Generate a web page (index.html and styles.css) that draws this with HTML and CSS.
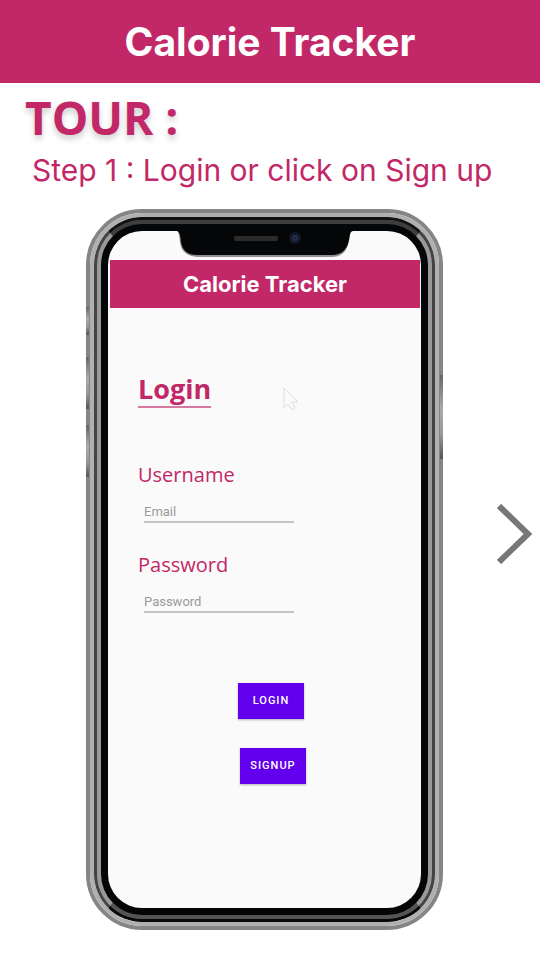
FILE: index.html
```html
<!DOCTYPE html>
<html lang="en">
<head>
<meta charset="utf-8">
<meta name="viewport" content="width=device-width, initial-scale=1">
<title>Calorie Tracker</title>
<link rel="stylesheet" href="styles.css">
</head>
<body>
<header class="app-bar"><h1 class="app-title">Calorie Tracker</h1></header>
<main class="tour">
  <h2 class="tour-title">TOUR :</h2>
  <p class="tour-step">Step 1 : Login or click on Sign up</p>
  <div class="stage">
    <div class="phone">
      <span class="key key-mute"></span>
      <span class="key key-up"></span>
      <span class="key key-down"></span>
      <span class="key key-power"></span>
      <div class="rail">
        <div class="band">
          <div class="bezel">
            <div class="screen">
              <svg class="notch" viewBox="0 0 176 26" aria-hidden="true">
                <path fill="#909090" d="M0 0H176C173 0 173 4 172 10Q169 26 155 26H20Q5 25 3 12Q2 0 0 0Z"/>
                <path fill="#050608" d="M0 0H176C173 0 173 4 172 9Q169 24 155 24H20Q6 24 4 11Q3 0 0 0Z"/>
                <rect x="57" y="5" width="44" height="5" rx="2" fill="#2b2b2b"/>
                <circle cx="118" cy="7" r="6" fill="#11182a"/>
                <circle cx="118" cy="7" r="3" fill="#26304c"/>
                <circle cx="118" cy="7" r="1" fill="#10182c"/>
              </svg>
              <div class="screen-bar">Calorie Tracker</div>
              <form class="login">
                <svg class="cursor" viewBox="0 0 16 24" aria-hidden="true"><path d="M1 1V21L5 17L9 23L12 21L9 15H15Z"/></svg>
                <h3 class="login-title">Login</h3>
                <div class="field">
                  <label for="username">Username</label>
                  <input id="username" type="text" placeholder="Email">
                </div>
                <div class="field">
                  <label for="password">Password</label>
                  <input id="password" type="password" placeholder="Password">
                </div>
                <div class="actions">
                  <button class="action" type="button">LOGIN</button>
                  <button class="action action-signup" type="button">SIGNUP</button>
                </div>
              </form>
            </div>
          </div>
        </div>
      </div>
    </div>
    <button class="next" type="button" aria-label="Next step">
      <svg viewBox="0 0 36 60" width="36" height="60" aria-hidden="true"><path d="M2 2L31 30L2 58"/></svg>
    </button>
  </div>
</main>
</body>
</html>
```
FILE: styles.css
```css
* { box-sizing: border-box; }
body {
  margin: 0;
  background: #fff;
  color: #c22868;
  font-family: "Open Sans", "Noto Sans", sans-serif;
}
h1, h2, h3, p { margin: 0; }
button { border: 0; padding: 0; cursor: pointer; }

.app-bar {
  display: flex;
  align-items: center;
  justify-content: center;
  padding: 16px;
  background: #c22868;
  color: #fff;
}
.app-title { font: 700 39px/51px Inter, sans-serif; }

.tour-title {
  padding: 6px 25px 0;
  font-size: 46px;
  font-weight: 700;
  line-height: 56px;
  text-shadow: 0 4px 6px rgba(0, 0, 0, 0.2);
}
.tour-step {
  padding: 0 32px;
  font: 400 30px/50px Inter, sans-serif;
}

.stage {
  display: grid;
  grid-template-columns: 86fr 357px 97fr;
  align-items: start;
  padding: 14px 0 30px;
}
.phone {
  position: relative;
  grid-column: 2;
  border: 4px solid #858585;
  border-radius: 56px;
}
.rail {
  border: 4px solid #b0b0b0;
  border-radius: 52px;
}
.band {
  border: 3px solid #444;
  border-color: #111 #444 #080808;
  border-radius: 48px;
  background: #444;
}
.bezel {
  padding: 7px;
  border: 4px solid #999;
  border-color: #3c3e40 #999 #555;
  border-radius: 45px;
  background: #050607;
}
.screen {
  position: relative;
  overflow: hidden;
  padding-top: 29px;
  border-radius: 34px;
  background: #fafafa;
}
.key {
  position: absolute;
  left: -4px;
  width: 3px;
  background: linear-gradient(#666, #aaa 40%, #999 70%, #555);
}
.key-mute { top: 94px; height: 28px; }
.key-up { top: 144px; height: 52px; }
.key-down { top: 212px; height: 52px; }
.key-power { top: 162px; right: -4px; left: auto; height: 84px; }
.notch {
  position: absolute;
  top: 0;
  left: 69px;
  width: 176px;
  height: 26px;
}
.screen-bar {
  margin: 0 1px 0 2px;
  background: #c22868;
  color: #fff;
  font: 700 22px/48px Inter, sans-serif;
  text-align: center;
}

.login {
  position: relative;
  padding: 64px 30px 124px;
}
.cursor {
  position: absolute;
  top: 79px;
  left: 175px;
  width: 16px;
  height: 24px;
  fill: none;
  stroke: #dedede;
}
.login-title {
  width: fit-content;
  margin-bottom: 50px;
  border-bottom: 2px solid #d678a0;
  font-size: 27px;
  font-weight: 700;
  line-height: 34px;
}
.field {
  display: grid;
  margin-bottom: 25px;
}
.field label {
  font-size: 20px;
  line-height: 34px;
}
.field input {
  width: 150px;
  height: 31px;
  margin-left: 6px;
  padding: 9px 0 0;
  border: 0;
  border-bottom: 2px solid #c4c4c4;
  border-radius: 0;
  background: none;
  color: #333;
  font: 400 13px/20px Roboto, sans-serif;
}
.field input::placeholder { color: #999; opacity: 1; }
.actions {
  display: grid;
  gap: 29px;
  width: 66px;
  margin: 70px 0 0 100px;
}
.action {
  height: 36px;
  background: #6200ee;
  box-shadow: 0 1px 2px rgba(0, 0, 0, 0.3);
  color: #fff;
  font: 500 11px/16px Roboto, sans-serif;
  letter-spacing: 1px;
}
.action-signup { margin: 0 -2px 0 2px; }

.next {
  align-self: start;
  justify-self: end;
  margin: 295px 7px 0 0;
  background: none;
}
.next svg {
  display: block;
  fill: none;
  stroke: #777;
  stroke-width: 6;
}
```
